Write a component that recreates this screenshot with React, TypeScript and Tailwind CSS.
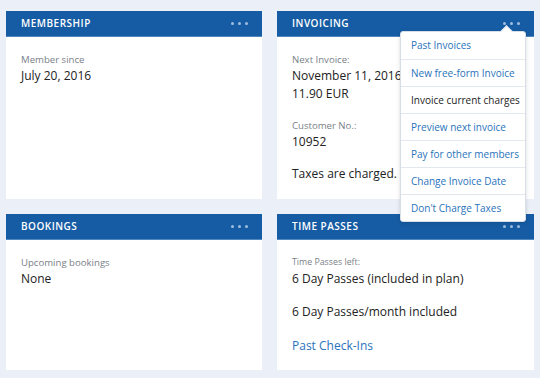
import React from 'react';

const font = { fontFamily: '"Open Sans", "Liberation Sans", sans-serif' };

const Dots = () => (
  <div className="flex items-center gap-[4px]">
    <span className="w-[3px] h-[3px] rounded-full bg-[#9fbde0]" />
    <span className="w-[3px] h-[3px] rounded-full bg-[#9fbde0]" />
    <span className="w-[3px] h-[3px] rounded-full bg-[#9fbde0]" />
  </div>
);

const Card: React.FC<{ title: string; className?: string; children: React.ReactNode }> = ({ title, className, children }) => (
  <div className={`bg-white flex flex-col ${className ?? ''}`}>
    <div className="h-[26px] bg-[#165ca4] border-b border-[#4f86c0] flex items-center justify-between pl-[15px] pr-[14px]">
      <span className="text-[10px] font-semibold tracking-[0.05em] text-white">{title}</span>
      <Dots />
    </div>
    <div className="px-[15px] pt-[15px]">{children}</div>
  </div>
);

const Label: React.FC<{ children: React.ReactNode; className?: string }> = ({ children, className }) => (
  <div className={`leading-[15px] text-[#7a7f88] ${className ?? 'text-[9.6px]'}`}>{children}</div>
);

const Value: React.FC<{ children: React.ReactNode; className?: string }> = ({ children, className }) => (
  <div className={`text-[12px] leading-[18px] ${className ?? ''}`}>{children}</div>
);

const menuItems = [
  { label: 'Past Invoices', link: true },
  { label: 'New free-form Invoice', link: true },
  { label: 'Invoice current charges', link: false },
  { label: 'Preview next invoice', link: true },
  { label: 'Pay for other members', link: true },
  { label: 'Change Invoice Date', link: true },
  { label: "Don't Charge Taxes", link: true },
];

const InvoiceMenu = () => (
  <div className="absolute right-[8px] top-[20px] w-[126px] bg-white border border-[#d8dee8] rounded-[3px] shadow-[0_1px_4px_rgba(0,0,0,0.15)] z-10">
    <div className="absolute -top-[5px] right-[14px] w-[9px] h-[9px] bg-white border-l border-t border-[#d8dee8] rotate-45" />
    {menuItems.map((item, i) => (
      <div
        key={item.label}
        className={`relative h-[27px] flex items-center pl-[10px] whitespace-nowrap text-[10px] ${i > 0 ? 'border-t border-[#e3e7ee]' : ''} ${item.link ? 'text-[#2a73bb]' : 'text-[#222]'}`}
      >
        {item.label}
      </div>
    ))}
  </div>
);

export default function App() {
  return (
    <div style={font} className="w-[540px] h-[378px] bg-[#ebeff8] px-[6px] pt-[11px] overflow-hidden text-[#222]">
      <div className="grid grid-cols-[256px_257px] gap-x-[15px] gap-y-[15px]">
        <Card title="MEMBERSHIP" className="h-[188px]">
          <Label>Member since</Label>
          <Value>July 20, 2016</Value>
        </Card>

        <div className="relative">
          <Card title="INVOICING" className="h-[188px]">
            <Label>Next Invoice:</Label>
            <Value>November 11, 2016</Value>
            <Value>11.90 EUR</Value>
            <Label className="mt-[15px] text-[9.6px]">Customer No.:</Label>
            <Value>10952</Value>
            <Value className="mt-[14px]">Taxes are charged.</Value>
          </Card>
          <InvoiceMenu />
        </div>

        <Card title="BOOKINGS" className="h-[156px]">
          <Label>Upcoming bookings</Label>
          <Value>None</Value>
        </Card>

        <Card title="TIME PASSES" className="h-[156px]">
          <Label className="text-[8.8px]">Time Passes left:</Label>
          <Value>6 Day Passes (included in plan)</Value>
          <Value className="mt-[15px]">6 Day Passes/month included</Value>
          <Value className="mt-[16px] text-[#2a73bb]">Past Check-Ins</Value>
        </Card>
      </div>
    </div>
  );
}
